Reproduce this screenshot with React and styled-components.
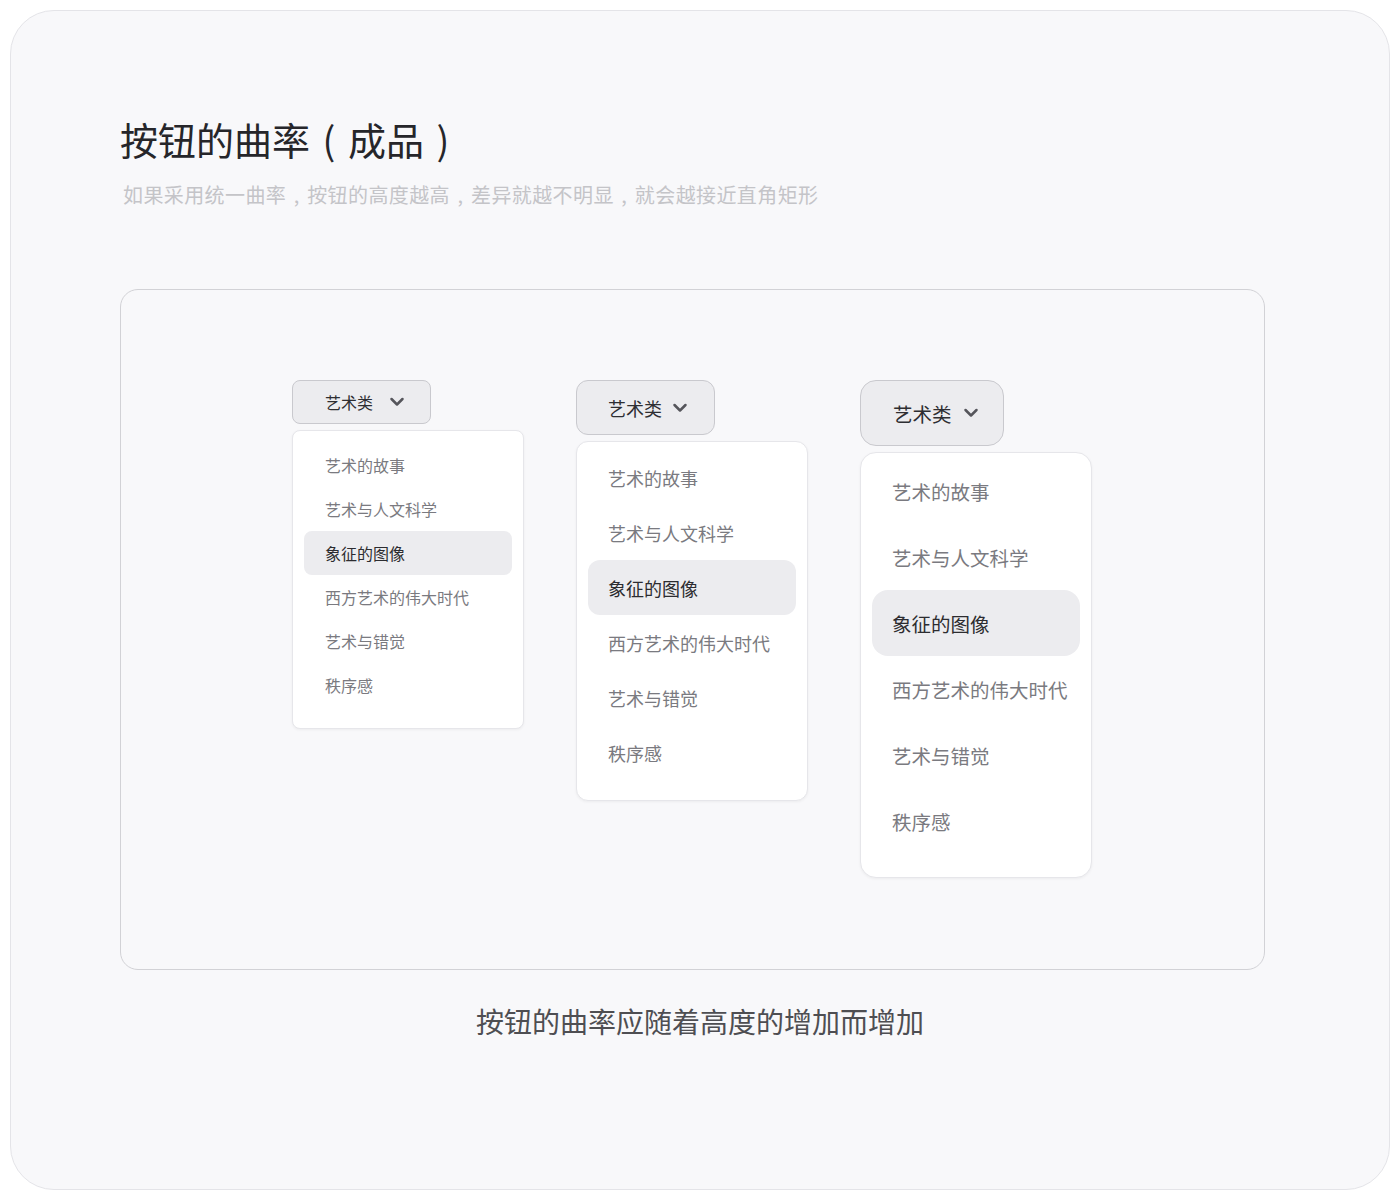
import React from "react";
import styled, { createGlobalStyle } from "styled-components";

const Global = createGlobalStyle`
  html, body { margin: 0; padding: 0; background: #ffffff; }
  body { font-family: "Noto Sans CJK SC", "Noto Sans", sans-serif; }
`;

const Page = styled.div`
  padding: 10px;
`;

const Card = styled.div`
  box-sizing: border-box;
  height: 1180px;
  border: 1px solid #e4e4e8;
  border-radius: 44px;
  background: #f8f8fa;
  padding: 100px 0 0 109px;
`;

const Title = styled.h1`
  margin: 0;
  font-size: 38px;
  line-height: 56px;
  font-weight: 400;
  color: #26262a;
`;

/* punctuation set in the middle of its own em box */
const Punct = styled.span`
  display: inline-block;
  width: ${(p) => p.$w || "1em"};
  text-align: center;
`;

const Subtitle = styled.p`
  margin: 14px 0 0 3px;
  font-size: 20px;
  letter-spacing: 0.4px;
  line-height: 28px;
  color: #c4c4c8;
`;

const Panel = styled.div`
  box-sizing: border-box;
  width: 1145px;
  height: 681px;
  margin-top: 80px;
  border: 1px solid #d2d2d6;
  border-radius: 18px;
  display: flex;
  align-items: flex-start;
  gap: 52px;
  padding: 90px 0 0 171px;
`;

const Column = styled.div`
  width: 232px;
  display: flex;
  flex-direction: column;
  gap: 6px;
`;

const Trigger = styled.div`
  box-sizing: border-box;
  width: ${(p) => p.$w}px;
  height: ${(p) => p.$h}px;
  border: 1px solid #c9c9ce;
  border-radius: ${(p) => p.$r}px;
  background: #ececef;
  display: flex;
  align-items: center;
  padding-left: ${(p) => p.$pl}px;
  gap: ${(p) => p.$gap}px;
  font-size: ${(p) => p.$fs}px;
  color: #2e2e32;
`;

const Chevron = styled.svg`
  width: 16px;
  height: 10px;
  flex: none;
`;

const Menu = styled.div`
  box-sizing: border-box;
  width: 232px;
  background: #ffffff;
  border: 1px solid #e6e6ea;
  border-radius: ${(p) => p.$r}px;
  box-shadow: 0 1px 3px rgba(0, 0, 0, 0.05);
  padding: ${(p) => p.$pt}px 11px ${(p) => p.$pb}px;
  display: flex;
  flex-direction: column;
`;

const Item = styled.div`
  height: ${(p) => p.$h}px;
  display: flex;
  align-items: center;
  padding-left: ${(p) => p.$pl}px;
  border-radius: ${(p) => p.$r}px;
  font-size: ${(p) => p.$fs}px;
  color: ${(p) => (p.$active ? "#2c2c30" : "#7a7a80")};
  background: ${(p) => (p.$active ? "#ececef" : "transparent")};
  white-space: nowrap;
`;

const Caption = styled.p`
  margin: 31px 0 0 -109px;
  text-align: center;
  font-size: 28px;
  line-height: 40px;
  color: #4e4e52;
`;

const items = ["艺术的故事", "艺术与人文科学", "象征的图像", "西方艺术的伟大时代", "艺术与错觉", "秩序感"];

const sizes = [
  { w: 139, h: 44, r: 8, pl: 32, gap: 16, fs: 16, ir: 8, ipl: 21, pt: 12, pb: 21 },
  { w: 139, h: 55, r: 12, pl: 31, gap: 10, fs: 18, ir: 12, ipl: 20, pt: 8, pb: 20 },
  { w: 144, h: 66, r: 16, pl: 32, gap: 11, fs: 19.5, ir: 16, ipl: 20, pt: 5, pb: 23 },
];

function Dropdown({ s }) {
  return (
    <Column>
      <Trigger $w={s.w} $h={s.h} $r={s.r} $pl={s.pl} $gap={s.gap} $fs={s.fs}>
        <span>艺术类</span>
        <Chevron viewBox="0 0 16 10">
          <polyline points="2.5,2 8,7.5 13.5,2" fill="none" stroke="#55555b" strokeWidth="2.5" strokeLinecap="round" strokeLinejoin="round" />
        </Chevron>
      </Trigger>
      <Menu $r={s.r} $pt={s.pt} $pb={s.pb}>
        {items.map((t, i) => (
          <Item key={t} $h={s.h} $r={s.ir} $pl={s.ipl} $fs={s.fs} $active={i === 2}>
            {t}
          </Item>
        ))}
      </Menu>
    </Column>
  );
}

const Comma = () => <Punct $w="1.05em">,</Punct>;

export default function App() {
  return (
    <Page>
      <Global />
      <Card>
        <Title>
          按钮的曲率<Punct>(</Punct>成品<Punct>)</Punct>
        </Title>
        <Subtitle>
          如果采用统一曲率<Comma />按钮的高度越高<Comma />差异就越不明显<Comma />就会越接近直角矩形
        </Subtitle>
        <Panel>
          {sizes.map((s, i) => (
            <Dropdown key={i} s={s} />
          ))}
        </Panel>
        <Caption>按钮的曲率应随着高度的增加而增加</Caption>
      </Card>
    </Page>
  );
}
